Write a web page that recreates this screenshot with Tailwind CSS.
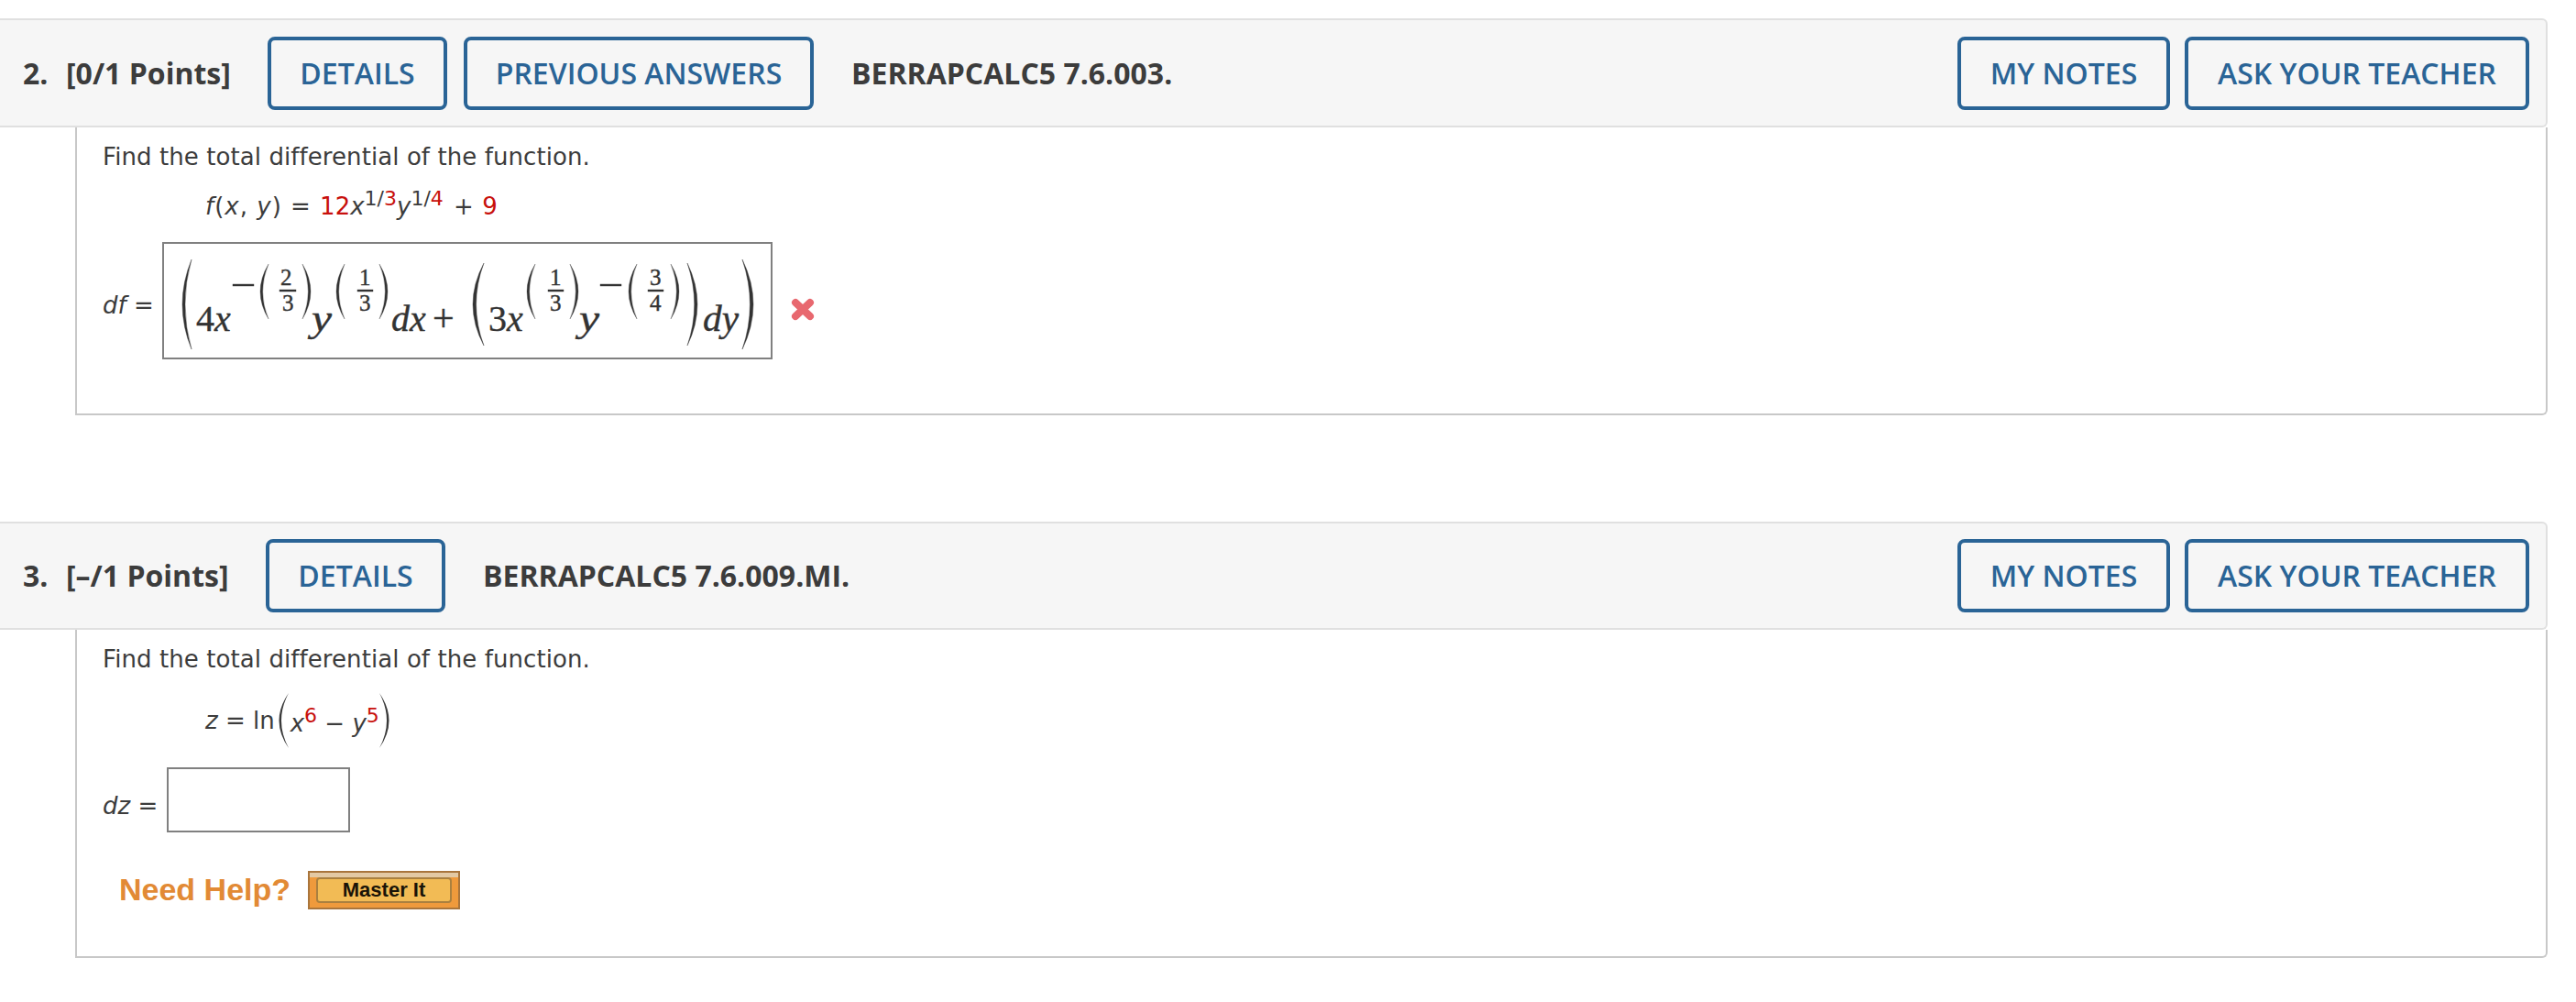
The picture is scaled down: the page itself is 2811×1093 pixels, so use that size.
<!DOCTYPE html>
<html>
<head>
<meta charset="utf-8">
<script src="https://cdn.jsdelivr.net/npm/@tailwindcss/browser@4"></script>
</head>
<body class="bg-white">
<div class="w-[2811px] h-[1093px] overflow-hidden bg-white pt-[20px] pr-[31px] text-[#3c3c3c] font-['DejaVu_Sans',sans-serif]">

  <section>
    <header class="h-[119px] flex items-center bg-[#f6f6f6] border-y-2 border-r-2 border-[#e0e0e0] rounded-tr-md rounded-br-md pr-[18px] font-['Open_Sans',sans-serif] text-[32px] font-semibold">
      <span class="ml-[25px] w-[47px] font-bold">2.</span>
      <span class="w-[220px] font-bold">[0/1 Points]</span>
      <a class="h-[80px] w-[196px] flex items-center justify-center border-[4px] border-[#2a6496] rounded-lg text-[#2a6496]">DETAILS</a>
      <a class="ml-[18px] h-[80px] w-[382px] flex items-center justify-center border-[4px] border-[#2a6496] rounded-lg text-[#2a6496]">PREVIOUS ANSWERS</a>
      <span class="ml-[41px] font-bold">BERRAPCALC5 7.6.003.</span>
      <a class="ml-auto h-[80px] w-[232px] flex items-center justify-center border-[4px] border-[#2a6496] rounded-lg text-[#2a6496]">MY NOTES</a>
      <a class="ml-[16px] h-[80px] w-[376px] flex items-center justify-center border-[4px] border-[#2a6496] rounded-lg text-[#2a6496]">ASK YOUR TEACHER</a>
    </header>
    <div class="ml-[82px] h-[314px] border-l-2 border-r-2 border-b-2 border-[#c8c8c8] rounded-br-md pl-[28px] text-[26px] leading-none">
      <p class="pt-[19px] h-[66px] tracking-[0.08px]">Find the total differential of the function.</p>
      <p class="ml-[112px] h-[59px] pt-[1px] whitespace-nowrap"><span class="tracking-[1px]"><i>f</i>(<i>x</i>, <i>y</i>) = </span><span class="text-[#c8100c]">12</span><i>x</i><span class="align-[10px] text-[22px]">1/<span class="text-[#c8100c]">3</span></span><i>y</i><span class="align-[10px] text-[22px]">1/<span class="text-[#c8100c]">4</span></span><span class="ml-[3px]"> + </span><span class="text-[#c8100c] ml-[1px]">9</span></p>
      <div class="flex items-center h-[127px]">
        <span class="w-[65px] whitespace-nowrap relative top-[5px]"><i>df</i> =</span>
        <div class="w-[666px] h-[128px] border-2 border-[#808080] shrink-0">
          <svg class="block w-[662px] h-[124px] font-['Liberation_Serif',serif]" viewBox="180 266 662 124" fill="#333" stroke="#333" stroke-width="0.4">
            <defs>
              <path id="lp" d="M10 0Q-10 50 10 100Q-4 50 10 0Z"/>
            </defs>
            <use href="#lp" transform="translate(200 283) scale(1 .98)"/>
            <text x="215" y="361" font-size="40">4<tspan font-style="italic">x</tspan></text>
            <rect x="255" y="310" width="23" height="2"/>
            <use href="#lp" transform="translate(285 288) scale(.9 .6)"/>
            <text x="307" y="311" font-size="25">2</text><rect x="306" y="316" width="18" height="2"/><text x="309" y="339" font-size="25">3</text>
            <use href="#lp" transform="translate(340 288) scale(-.9 .6)"/>
            <text x="341" y="361" font-size="40" font-style="italic" textLength="22" lengthAdjust="spacingAndGlyphs">y</text>
            <use href="#lp" transform="translate(368 288) scale(.9 .6)"/>
            <text x="393" y="311" font-size="25">1</text><rect x="391" y="316" width="17" height="2"/><text x="393" y="339" font-size="25">3</text>
            <use href="#lp" transform="translate(424 288) scale(-.9 .6)"/>
            <text x="428" y="361" font-size="40" font-style="italic">dx</text>
            <text x="473" y="361" font-size="42">+</text>
            <use href="#lp" transform="translate(517 287) scale(1.2 .9)"/>
            <text x="534" y="361" font-size="40">3<tspan font-style="italic">x</tspan></text>
            <use href="#lp" transform="translate(576 288) scale(.9 .6)"/>
            <text x="601" y="311" font-size="25">1</text><rect x="599" y="316" width="17" height="2"/><text x="601" y="339" font-size="25">3</text>
            <use href="#lp" transform="translate(632 288) scale(-.9 .6)"/>
            <text x="633" y="361" font-size="40" font-style="italic" textLength="22" lengthAdjust="spacingAndGlyphs">y</text>
            <rect x="656" y="310" width="23" height="2"/>
            <use href="#lp" transform="translate(687 288) scale(.9 .6)"/>
            <text x="710" y="311" font-size="25">3</text><rect x="708" y="316" width="17" height="2"/><text x="710" y="339" font-size="25">4</text>
            <use href="#lp" transform="translate(742 288) scale(-.9 .6)"/>
            <use href="#lp" transform="translate(762 287) scale(-1.1 .9)"/>
            <text x="768" y="361" font-size="40" font-style="italic" textLength="39" lengthAdjust="spacingAndGlyphs">dy</text>
            <use href="#lp" transform="translate(823 283) scale(-1.2 .98)"/>
          </svg>
        </div>
        <svg class="ml-[19px] w-[28px] h-[25px] relative top-[10px]" viewBox="0 0 28 25" fill="none" stroke="#e8686f" stroke-width="8" stroke-linecap="round"><path d="M6 5L22 20M22 5L6 20"/></svg>
      </div>
    </div>
  </section>

  <section class="mt-[116px]">
    <header class="h-[118px] flex items-center bg-[#f6f6f6] border-y-2 border-r-2 border-[#e0e0e0] rounded-tr-md rounded-br-md pr-[18px] font-['Open_Sans',sans-serif] text-[32px] font-semibold">
      <span class="ml-[25px] w-[47px] font-bold">3.</span>
      <span class="w-[218px] font-bold">[–/1 Points]</span>
      <a class="h-[80px] w-[196px] flex items-center justify-center border-[4px] border-[#2a6496] rounded-lg text-[#2a6496]">DETAILS</a>
      <span class="ml-[41px] font-bold">BERRAPCALC5 7.6.009.MI.</span>
      <a class="ml-auto h-[80px] w-[232px] flex items-center justify-center border-[4px] border-[#2a6496] rounded-lg text-[#2a6496]">MY NOTES</a>
      <a class="ml-[16px] h-[80px] w-[376px] flex items-center justify-center border-[4px] border-[#2a6496] rounded-lg text-[#2a6496]">ASK YOUR TEACHER</a>
    </header>
    <div class="ml-[82px] h-[358px] border-l-2 border-r-2 border-b-2 border-[#c8c8c8] rounded-br-md pl-[28px] text-[26px] leading-none">
      <p class="pt-[19px] h-[66px] tracking-[0.08px]">Find the total differential of the function.</p>
      <div class="ml-[112px] h-[84px] pb-[18px] flex items-center whitespace-nowrap">
        <span><i>z</i> = ln</span>
        <svg class="w-[13px] h-[60px] ml-[2px]" viewBox="0 0 13 60" fill="#3a3a3a"><path d="M13 0Q-8 30 13 60Q-3 30 13 0Z"/></svg>
        <span class="ml-[2px]"><i>x</i><span class="align-[10px] text-[#c8100c] text-[22px]">6</span> − <i>y</i><span class="align-[10px] text-[#c8100c] text-[22px]">5</span></span>
        <svg class="w-[13px] h-[60px]" viewBox="0 0 13 60" fill="#3a3a3a"><path d="M0 0Q21 30 0 60Q16 30 0 0Z"/></svg>
      </div>
      <div class="flex items-center h-[71px]">
        <span class="w-[70px] whitespace-nowrap relative top-[6px]"><i>dz</i> =</span>
        <div class="w-[200px] h-[71px] border-2 border-[#808080] bg-white"></div>
      </div>
      <div class="flex items-center mt-[42px] ml-[18px] h-[42px]">
        <span class="font-['Liberation_Sans',sans-serif] font-bold text-[34px] text-[#e28a35] relative top-[-1px]">Need Help?</span>
        <a class="ml-[19px] w-[166px] h-[42px] border-2 border-[#a9753c] bg-[#ef9a3c] flex flex-col">
          <span class="h-[5px] bg-[#e3c9a4]"></span>
          <span class="mx-[7px] h-[28px] border-2 border-[#aa803f] rounded-sm bg-[#f2bb55] flex items-center justify-center font-['Liberation_Sans',sans-serif] font-bold text-[22px] text-[#1a1408]">Master It</span>
        </a>
      </div>
    </div>
  </section>
</div>
</body>
</html>
